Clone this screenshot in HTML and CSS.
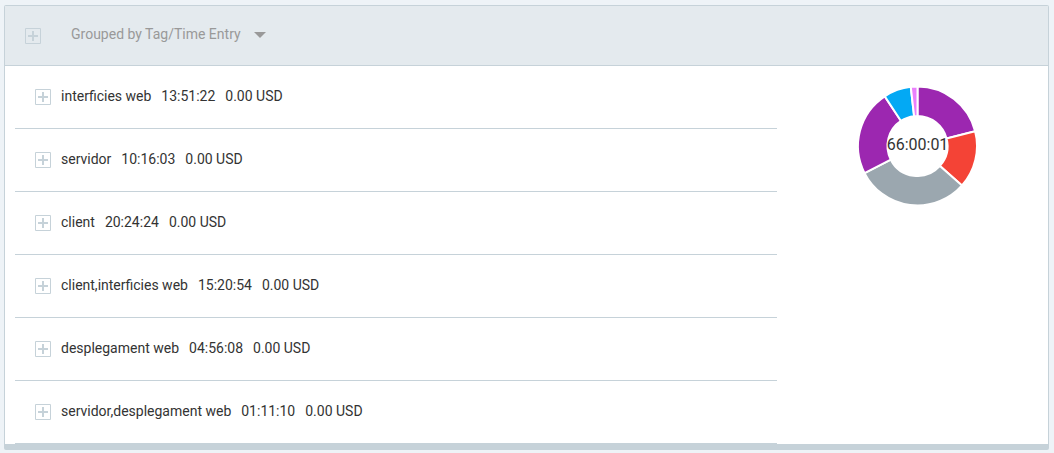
FILE: index.html
```
<!DOCTYPE html>
<html lang="en">
<head>
<meta charset="utf-8">
<meta name="viewport" content="width=device-width, initial-scale=1">
<title>Grouped by Tag/Time Entry</title>
<link rel="stylesheet" href="styles.css">
</head>
<body>
<svg width="0" height="0" class="defs" aria-hidden="true">
  <symbol id="plus" viewBox="0 0 16 16">
    <path d="M.5 .5h15v15H.5z" fill="none" stroke="#c6d2d9"/>
    <path d="M7 3h2v4h4v2H9v4H7V9H3V7h4z" fill="#c6d2d9"/>
  </symbol>
</svg>
<main class="card">
  <header class="card-header">
    <button class="expand" type="button" aria-label="Expand all"><svg class="icon"><use href="#plus"/></svg></button>
    <button class="group-menu" type="button"><span class="label">Grouped by Tag/Time Entry</span>
      <svg class="caret" viewBox="0 0 12 6" aria-hidden="true"><path d="M0 0h12L6 6z" fill="#999"/></svg>
    </button>
  </header>
  <div class="card-body">
    <ul class="entries">
      <li class="entry"><button class="expand" type="button" aria-label="Expand interficies web"><svg class="icon"><use href="#plus"/></svg></button><span class="label">interficies web</span><span class="label">13:51:22</span><span class="label">0.00 USD</span></li>
      <li class="entry"><button class="expand" type="button" aria-label="Expand servidor"><svg class="icon"><use href="#plus"/></svg></button><span class="label">servidor</span><span class="label">10:16:03</span><span class="label">0.00 USD</span></li>
      <li class="entry"><button class="expand" type="button" aria-label="Expand client"><svg class="icon"><use href="#plus"/></svg></button><span class="label">client</span><span class="label">20:24:24</span><span class="label">0.00 USD</span></li>
      <li class="entry"><button class="expand" type="button" aria-label="Expand client,interficies web"><svg class="icon"><use href="#plus"/></svg></button><span class="label">client,interficies web</span><span class="label">15:20:54</span><span class="label">0.00 USD</span></li>
      <li class="entry"><button class="expand" type="button" aria-label="Expand desplegament web"><svg class="icon"><use href="#plus"/></svg></button><span class="label">desplegament web</span><span class="label">04:56:08</span><span class="label">0.00 USD</span></li>
      <li class="entry"><button class="expand" type="button" aria-label="Expand servidor,desplegament web"><svg class="icon"><use href="#plus"/></svg></button><span class="label">servidor,desplegament web</span><span class="label">01:11:10</span><span class="label">0.00 USD</span></li>
    </ul>
    <div class="chart">
      <svg class="donut" viewBox="-58.5 -59 117 118" role="img" aria-label="Total time 66:00:01">
        <g stroke="#fff" stroke-width="2">
          <path fill="#9c27b0" d="M0-59.5A59.5 59.5 0 0 1 57.63-14.8L29.06-7.46A30 30 0 0 0 0-30z"/>
          <path fill="#f44336" d="M57.63-14.8A59.5 59.5 0 0 1 44.5 39.5L22.43 19.92A30 30 0 0 0 29.06-7.46z"/>
          <path fill="#9ba7af" d="M44.5 39.5A59.5 59.5 0 0 1-52.97 27.1L-26.71 13.67A30 30 0 0 0 22.43 19.92z"/>
          <path fill="#9c27b0" d="M-52.97 27.1A59.5 59.5 0 0 1-32.75-49.67L-16.51-25.05A30 30 0 0 0-26.71 13.67z"/>
          <path fill="#03a9f4" d="M-32.75-49.67A59.5 59.5 0 0 1-6.74-59.12L-3.4-29.81A30 30 0 0 0-16.51-25.05z"/>
          <path fill="#ea80fc" d="M-6.74-59.12A59.5 59.5 0 0 1 0-59.5V-30A30 30 0 0 0-3.4-29.81z"/>
        </g>
        <text class="total" y="4" text-anchor="middle">66:00:01</text>
      </svg>
    </div>
  </div>
</main>
</body>
</html>
```
FILE: styles.css
```
* { box-sizing: border-box; }
body {
  margin: 0;
  padding: 5px 5px 3px 4px;
  background: #eef3f7;
  color: #333;
  font: 14px/20px Roboto, sans-serif;
}
.defs { position: absolute; }
button {
  padding: 0;
  border: 0;
  background: none;
  color: inherit;
  font: inherit;
  cursor: pointer;
}
.card {
  border: 1px solid #c6d2d9;
  border-bottom-width: 6px;
  border-radius: 2px;
  background: #fff;
}
.card-header {
  display: flex;
  align-items: center;
  gap: 30px;
  height: 60px;
  padding: 0 20px;
  border-bottom: 1px solid #c6d2d9;
  background: #e4eaee;
  color: #999;
}
.expand, .icon {
  display: block;
  flex: none;
  width: 16px;
  height: 16px;
}
.group-menu {
  display: flex;
  align-items: center;
  gap: 13px;
  padding-bottom: 2px;
}
.label { padding-bottom: 2px; }
.caret {
  width: 12px;
  height: 6px;
}
.card-body { display: flex; }
.entries {
  flex: 1;
  margin: 0;
  padding: 0 0 0 10px;
  list-style: none;
}
.entry {
  display: flex;
  align-items: center;
  gap: 10px;
  height: 63px;
  padding: 0 20px;
  border-bottom: 1px solid #c6d2d9;
}
.chart {
  display: flex;
  flex: 0 0 26%;
  justify-content: center;
  padding: 21px 0 0 10px;
}
.donut {
  overflow: visible;
  width: 117px;
  height: 118px;
}
.total {
  fill: #333;
  font-size: 16px;
}
```
